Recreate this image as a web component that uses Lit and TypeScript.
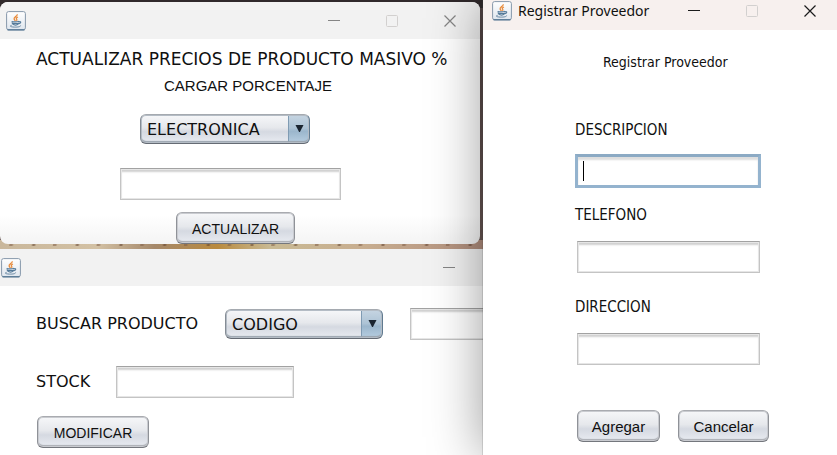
import { LitElement, html, css, svg } from "lit";
import { customElement, property } from "lit/decorators.js";

const controls = css`
  * {
    box-sizing: border-box;
  }
  form {
    margin: 0;
  }
  h1,
  h2,
  label {
    display: block;
    margin: 0;
    font-weight: 400;
    white-space: nowrap;
    color: #101010;
  }
  .headline {
    font: 17px/20px "DejaVu Sans", sans-serif;
  }
  .large {
    font: 16px/20px "DejaVu Sans", sans-serif;
  }
  .medium {
    font: 15px/20px "DejaVu Sans Condensed", "DejaVu Sans", sans-serif;
  }
  .small {
    font: 14px/20px "DejaVu Sans Condensed", "DejaVu Sans", sans-serif;
  }
  .plain {
    font: 15px/20px "Liberation Sans", Arial, sans-serif;
  }
  .field {
    display: block;
    height: 32px;
    padding: 4px 6px;
    border: 1px solid #c4c4c4;
    border-top-color: #a2a2a2;
    border-radius: 0;
    background: #fff;
    box-shadow: inset 0 0 0 1px #e6e6e6, inset 0 3px 2px #d0d0d0;
    font: 15px/20px "Liberation Sans", Arial, sans-serif;
    outline: none;
  }
  .button {
    height: 32px;
    padding: 2px 0 0;
    border: 1px solid #8f9298;
    border-top-color: #a9abb0;
    border-bottom-color: #74777d;
    border-radius: 6px;
    background: linear-gradient(#f6f7f9, #e6e8ec 45%, #d5d9e1 60%, #e9ecf2);
    box-shadow: inset 0 0 0 1px #c9cbd0, inset 0 -2px 1px #aaadb3;
    color: #101010;
    font: 15px/20px "Liberation Sans", Arial, sans-serif;
  }
  .caps {
    font-size: 14px;
  }
  .combo {
    display: block;
    position: relative;
    height: 30px;
  }
  .combo select {
    appearance: none;
    width: 100%;
    height: 100%;
    margin: 0;
    padding: 2px 24px 0 6px;
    border: 1px solid #858c95;
    border-top-color: #a5aab0;
    border-bottom-color: #656b74;
    border-right-color: #607a90;
    border-radius: 6px;
    background:
      linear-gradient(#7f9bb3, #7f9bb3) right 20px top / 1px 100% no-repeat,
      linear-gradient(#c6d5e2, #adc3d5 48%, #9bb6cc 58%, #b7cee1) right / 20px 100% no-repeat,
      linear-gradient(#f6f7f9, #e6e8ec 45%, #d5d9e1 60%, #e9ecf2);
    box-shadow: inset 0 0 0 1px #b4bcc5, inset 0 -2px 1px #99a3ad;
    color: #101010;
  }
  .arrow {
    position: absolute;
    right: 6px;
    top: 10px;
    width: 9px;
    height: 9px;
    pointer-events: none;
  }
`;

const arrow = html`<svg class="arrow" viewBox="0 0 9 9" aria-hidden="true">
  <path d="M0.5 1H8.5L4.9 8H4.1Z" fill="#1b2530" />
</svg>`;

@customElement("window-frame")
export class WindowFrame extends LitElement {
  @property() heading = "";
  @property({ type: Boolean, reflect: true }) active = false;
  @property({ type: Boolean, reflect: true }) partial = false;

  static styles = css`
    :host {
      display: flex;
      flex-direction: column;
      background: #fff;
      min-width: 0;
      overflow: hidden;
      color: #858585;
    }
    .bar {
      box-sizing: border-box;
      flex: none;
      display: flex;
      align-items: center;
      height: 37px;
      padding: 0 24px 0 6px;
      background: #f2f2f2;
    }
    :host([active]) {
      color: #1b1b1b;
    }
    :host([active]) .bar {
      height: 30px;
      padding: 0 21px 8px 9px;
      background: #f7f0ee;
    }
    :host([partial]) .bar {
      padding: 0 28px 0 1px;
    }
    .title {
      flex: 1;
      margin-left: 6px;
      font: 14px/20px "Noto Sans", sans-serif;
      color: #101010;
      white-space: nowrap;
    }
    .java {
      width: 20px;
      height: 20px;
    }
    .tools {
      display: flex;
      gap: 46px;
    }
    button {
      display: block;
      width: 12px;
      height: 12px;
      padding: 0;
      border: 0;
      background: none;
      color: inherit;
    }
    button svg {
      display: block;
    }
    .body {
      flex: 1;
    }
  `;

  private tool(label: string, path: unknown) {
    return html`<button type="button" aria-label=${label}>
      <svg width="12" height="12" viewBox="0 0 12 12" fill="none" stroke="currentColor">${path}</svg>
    </button>`;
  }

  render() {
    return html`
      <header class="bar">
        <svg class="java" viewBox="0 0 20 20" fill="none" aria-hidden="true">
          <defs>
            <linearGradient id="tile" x2="0" y2="1">
              <stop stop-color="#fff" />
              <stop offset="1" stop-color="#dfe6ee" />
            </linearGradient>
          </defs>
          <rect x="0.6" y="0.6" width="18.8" height="18.2" rx="2" fill="url(#tile)" stroke="#8698aa" />
          <path d="M1.5 18.8H18.5" stroke="#4e7290" stroke-width="1.2" />
          <path
            d="M11.2 3.2C11.8 5.2 7.4 6.1 8.1 8.1C8.4 8.8 9.1 9.3 9.2 10M12 6C10.4 6.6 9.8 7.5 10.7 8.4C11.1 9 10.9 9.4 10.5 9.9"
            stroke="#e88b3c"
            stroke-width="1.3"
          />
          <path
            d="M5.6 10.4C7.2 11.1 11.5 11.1 13 10.3M6 11.5C6.4 13.9 7.3 14.1 9.6 14.1C11.9 14.1 12.6 13.7 13 11.5M13.2 10.7C15.3 10.1 15.4 12.3 12.9 12.8M7 12.5H12"
            stroke="#557a99"
            stroke-width="1.1"
          />
          <path d="M5.6 14.3C2.8 15 4.8 16 8.5 16.1C11.6 16.2 14.8 15.7 14.6 14.6" stroke="#6787a2" />
        </svg>
        <span class="title">${this.heading}</span>
        <div class="tools">
          ${this.tool("Minimizar", svg`<path d="M0 5.5H12" />`)}
          ${this.partial
            ? ""
            : html`${this.tool("Maximizar", svg`<rect x="0.5" y="0.5" width="11" height="11" rx="1" stroke="#d2d0cf" />`)}
              ${this.tool("Cerrar", svg`<path d="M0.5 0.5L11.5 11.5M11.5 0.5L0.5 11.5" stroke-width="1.2" />`)}`}
        </div>
      </header>
      <div class="body"><slot></slot></div>
    `;
  }
}

@customElement("price-form")
export class PriceForm extends LitElement {
  static styles = [
    controls,
    css`
      form {
        padding: 10px 0 0 36px;
      }
      h2 {
        margin: 7px 0 0 128px;
      }
      .combo {
        width: 170px;
        margin: 18px 0 0 104px;
      }
      .field {
        width: 221px;
        margin: 24px 0 0 84px;
      }
      .button {
        display: block;
        width: 119px;
        margin: 12px 0 0 140px;
      }
    `,
  ];

  render() {
    return html`<form>
      <h1 class="headline">ACTUALIZAR PRECIOS DE PRODUCTO MASIVO %</h1>
      <h2 class="plain">CARGAR PORCENTAJE</h2>
      <div class="combo">
        <select class="large" aria-label="Categoria">
          <option>ELECTRONICA</option>
        </select>
        ${arrow}
      </div>
      <input class="field" aria-label="Porcentaje" />
      <button class="button caps" type="button">ACTUALIZAR</button>
    </form>`;
  }
}

@customElement("stock-form")
export class StockForm extends LitElement {
  static styles = [
    controls,
    css`
      form {
        padding: 22px 0 6px 36px;
      }
      .row {
        display: flex;
        align-items: center;
      }
      .row + .row {
        margin-top: 26px;
      }
      .combo {
        flex: none;
        width: 158px;
        margin: 0 27px 0 27px;
      }
      .search {
        flex: none;
        width: 178px;
      }
      .stock {
        width: 178px;
        margin-left: 26px;
      }
      .button {
        display: block;
        width: 112px;
        margin: 18px 0 0 1px;
      }
    `,
  ];

  render() {
    return html`<form>
      <div class="row">
        <label class="large" for="by">BUSCAR PRODUCTO</label>
        <div class="combo">
          <select class="large" id="by">
            <option>CODIGO</option>
          </select>
          ${arrow}
        </div>
        <input class="field search" aria-label="Buscar" />
      </div>
      <div class="row">
        <label class="large" for="stock">STOCK</label>
        <input class="field stock" id="stock" />
      </div>
      <button class="button caps" type="button">MODIFICAR</button>
    </form>`;
  }
}

@customElement("supplier-form")
export class SupplierForm extends LitElement {
  static styles = [
    controls,
    css`
      form {
        padding: 22px 0 12px 92px;
      }
      h1 {
        margin: 0 0 48px 28px;
      }
      .entry {
        position: relative;
        width: 186px;
        margin: 14px 0 17px;
      }
      .field {
        width: 183px;
        margin: 16px 0 24px 2px;
      }
      .entry .field {
        width: 186px;
        height: 34px;
        margin: 0;
        border: 3px solid #94b3ce;
        border-top-color: #8caac4;
        box-shadow: inset 0 3px 2px #dedede;
      }
      .caret {
        position: absolute;
        left: 8px;
        top: 7px;
        width: 1px;
        height: 20px;
        background: #000;
      }
      .actions {
        display: flex;
        gap: 18px;
        margin: 45px 0 0 2px;
      }
      .add {
        width: 83px;
      }
      .cancel {
        width: 91px;
      }
    `,
  ];

  render() {
    return html`<form>
      <h1 class="small">Registrar Proveedor</h1>
      <label class="medium" for="description">DESCRIPCION</label>
      <div class="entry">
        <input class="field" id="description" />
        <span class="caret"></span>
      </div>
      <label class="medium" for="phone">TELEFONO</label>
      <input class="field" id="phone" />
      <label class="medium" for="address">DIRECCION</label>
      <input class="field" id="address" />
      <div class="actions">
        <button class="button add" type="button">Agregar</button>
        <button class="button cancel" type="button">Cancelar</button>
      </div>
    </form>`;
  }
}

@customElement("app-root")
export class AppRoot extends LitElement {
  static styles = css`
    :host {
      display: grid;
      grid-template-columns: minmax(0, 483fr) minmax(0, 354fr);
      min-height: 100vh;
      overflow: hidden;
    }
    .left {
      display: flex;
      flex-direction: column;
      gap: 5px;
      padding-top: 2px;
      min-width: 0;
      background:
        linear-gradient(#30292b, #30292b) top / 100% 8px no-repeat,
        repeating-linear-gradient(100deg, transparent 0 9px, #7d5b4588 10px 12px, transparent 14px 31px, #5c3c2a88 33px 34px, transparent 36px 43px)
          0 243px / 100% 3px no-repeat,
        linear-gradient(90deg, #c9b79b, #d3c1a4 20%, #a5886a 32%, #b98a3e 45%, #c9ba94 56%, #c8ae90 75%, #b08d7c)
          0 240px / 100% 12px no-repeat,
        linear-gradient(#514343, #7b6761);
    }
    .prices {
      height: 242px;
      margin-right: 3px;
      border-radius: 8px;
      background: linear-gradient(#fff 88%, #f4f4f4);
    }
    .stock {
      flex: 1;
    }
    .supplier {
      position: relative;
      overflow: hidden;
      box-shadow: 0 0 50px rgba(0, 0, 0, 0.4), 0 0 1px #555;
    }
  `;

  render() {
    return html`
      <div class="left">
        <window-frame class="prices"><price-form></price-form></window-frame>
        <window-frame class="stock" partial><stock-form></stock-form></window-frame>
      </div>
      <window-frame class="supplier" heading="Registrar Proveedor" active>
        <supplier-form></supplier-form>
      </window-frame>
    `;
  }
}
